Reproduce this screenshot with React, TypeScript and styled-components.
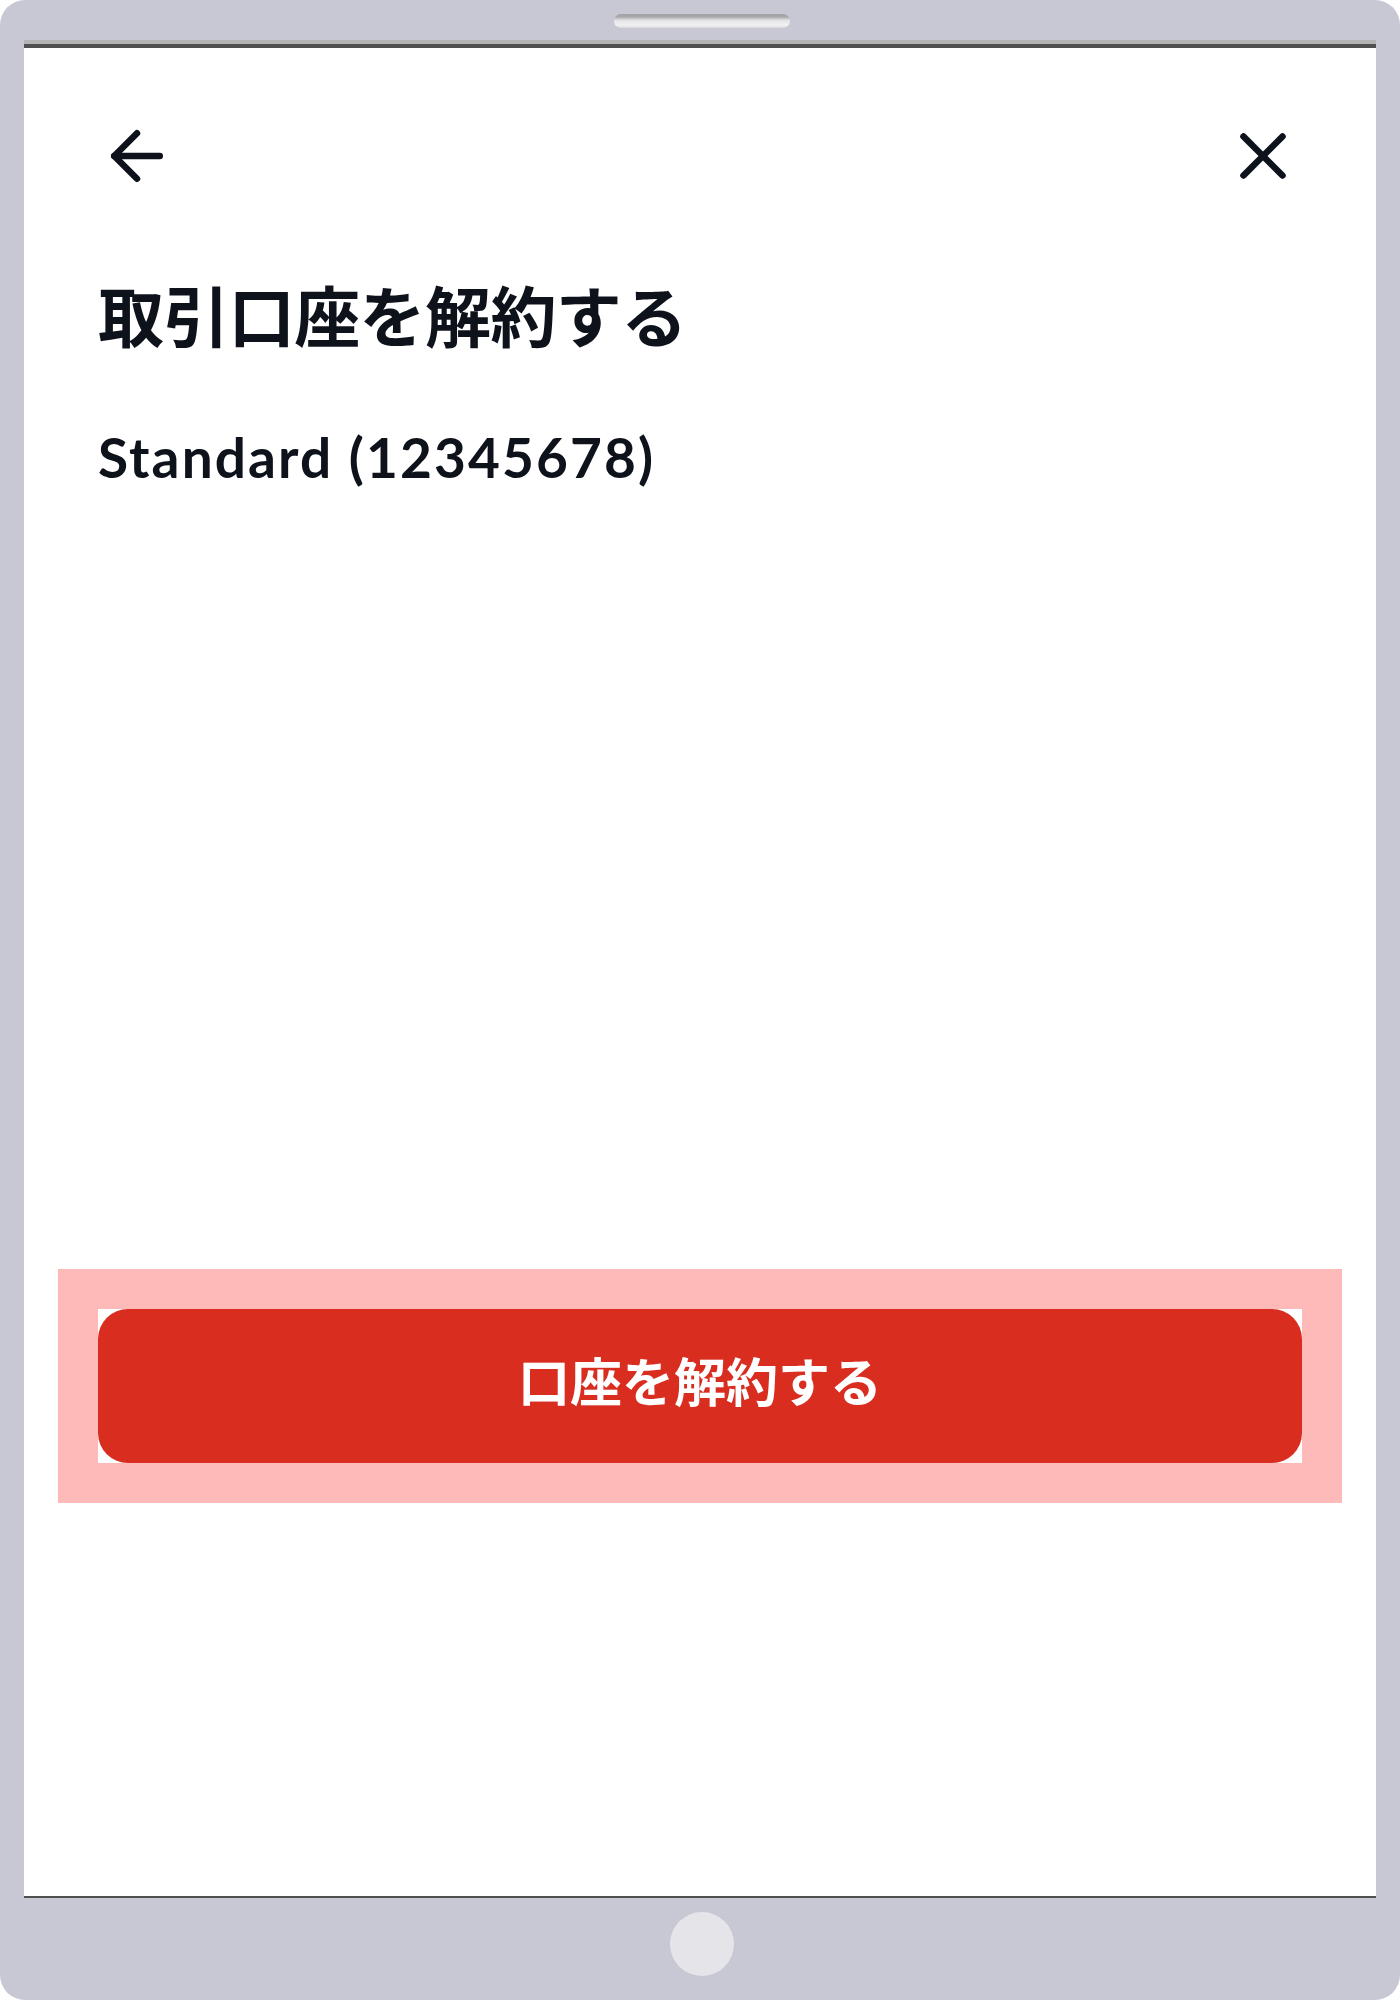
import React from "react";
import styled, { createGlobalStyle } from "styled-components";
import { ArrowLeft, X } from "lucide-react";

const GlobalStyle = createGlobalStyle`
  html, body {
    margin: 0;
    padding: 0;
    background: #ffffff;
  }
  * { box-sizing: border-box; }
`;

const Device = styled.div`
  width: 1400px;
  height: 2000px;
  background: #c8c8d4;
  border-radius: 25px;
  padding: 0 24px;
  display: flex;
  flex-direction: column;
  overflow: hidden;
`;

const TopBezel = styled.div`
  height: 40px;
  display: flex;
  justify-content: center;
  padding-top: 14px;
  padding-left: 4px;
`;

const Speaker = styled.div`
  width: 176px;
  height: 14px;
  border-radius: 7px;
  background: linear-gradient(180deg, #a2a2a4 0%, #a8a8aa 20%, #e4e4e6 45%, #f2f2f2 80%, #d8d8da 100%);
`;

const EdgeLight = styled.div`
  height: 4px;
  background: #b3b3b5;
`;

const EdgeDark = styled.div`
  height: 4px;
  background: #505050;
`;

const Screen = styled.main`
  flex: 1;
  background: #ffffff;
  border-bottom: 2px solid #505050;
  padding: 69px 74px 393px;
  display: flex;
  flex-direction: column;
  font-family: "Noto Sans CJK JP", "Noto Sans", sans-serif;
  color: #0e121b;
`;

const Header = styled.div`
  height: 78px;
  display: flex;
  align-items: center;
  justify-content: space-between;
`;

const IconButton = styled.button`
  width: 78px;
  height: 78px;
  padding: 0;
  border: none;
  background: transparent;
  color: #0e121b;
  display: flex;
  align-items: center;
  justify-content: center;
  cursor: pointer;
`;

const Title = styled.h1`
  margin: 85px 0 0;
  font-family: "Noto Sans CJK JP", sans-serif;
  font-size: 66px;
  line-height: 66px;
  font-weight: 700;
  letter-spacing: -0.6px;
  color: #0e121b;
`;

const AccountName = styled.div`
  margin-top: 79px;
  font-family: Lato, "Noto Sans", sans-serif;
  font-size: 55px;
  line-height: 64px;
  font-weight: 700;
  letter-spacing: 2.1px;
  color: #0e121b;
`;

const ActionArea = styled.div`
  margin: auto -40px 0;
  padding: 40px;
  background: #feb9b9;
`;

const ButtonWell = styled.div`
  background: #ffffff;
`;

const DangerButton = styled.button`
  width: 100%;
  height: 154px;
  border: none;
  border-radius: 30px;
  background: #d92d20;
  color: #ffffff;
  font-family: "Noto Sans CJK JP", sans-serif;
  font-size: 52px;
  font-weight: 700;
  display: flex;
  align-items: center;
  justify-content: center;
  padding: 0 0 14px;
  cursor: pointer;
`;

const BottomBezel = styled.div`
  height: 102px;
  display: flex;
  justify-content: center;
  padding-top: 14px;
  padding-left: 4px;
`;

const HomeButton = styled.div`
  width: 64px;
  height: 64px;
  border-radius: 50%;
  background: #e4e4e9;
`;

export default function App() {
  return (
    <>
      <GlobalStyle />
      <Device>
        <TopBezel>
          <Speaker />
        </TopBezel>
        <EdgeLight />
        <EdgeDark />
        <Screen>
          <Header>
            <IconButton aria-label="戻る">
              <ArrowLeft size={78} strokeWidth={2} />
            </IconButton>
            <IconButton aria-label="閉じる">
              <X size={78} strokeWidth={2} />
            </IconButton>
          </Header>
          <Title>取引口座を解約する</Title>
          <AccountName>Standard (12345678)</AccountName>
          <ActionArea>
            <ButtonWell>
              <DangerButton>口座を解約する</DangerButton>
            </ButtonWell>
          </ActionArea>
        </Screen>
        <BottomBezel>
          <HomeButton />
        </BottomBezel>
      </Device>
    </>
  );
}
